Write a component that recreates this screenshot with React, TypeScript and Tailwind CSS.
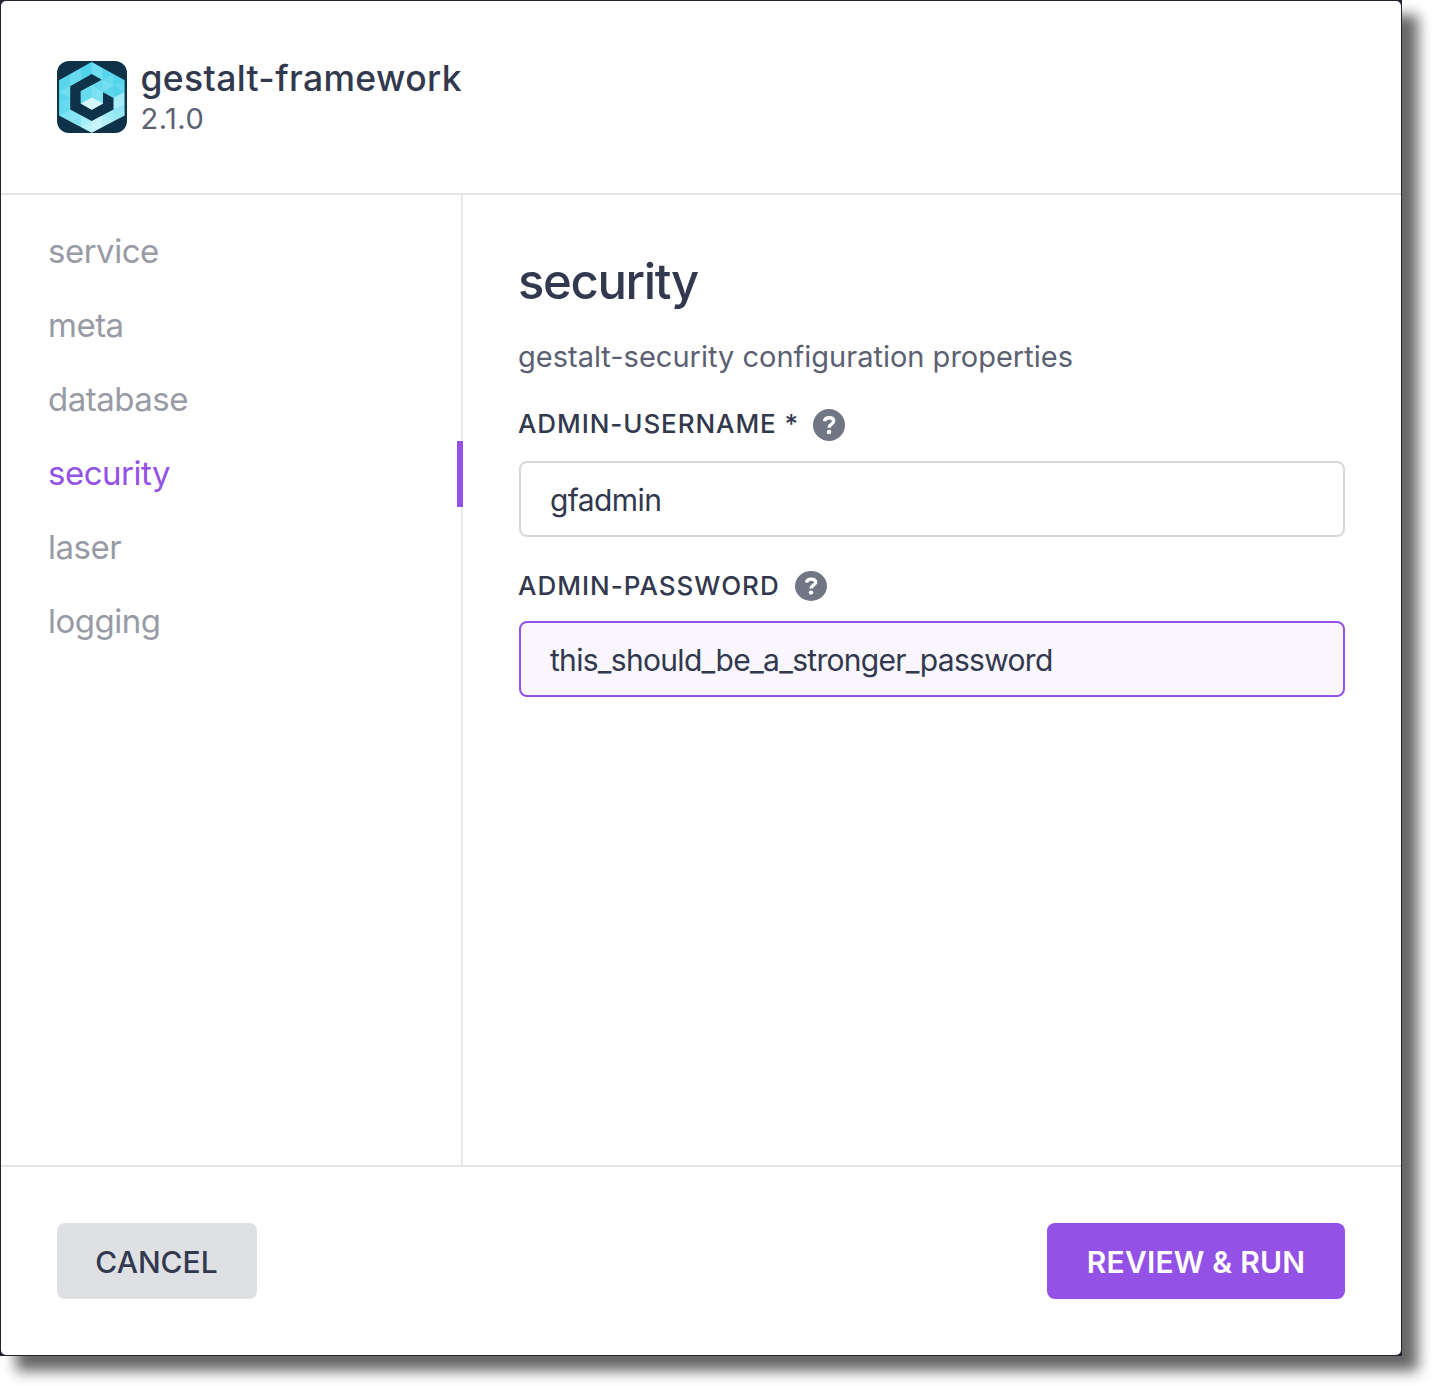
const NAV = ["service", "meta", "database", "security", "laser", "logging"];

function Logo() {
  return (
    <svg width="70" height="72" viewBox="0 0 70 72" className="shrink-0">
      <defs>
        <clipPath id="hex">
          <path d="M34.700 1 67.500 19.200V54.500L34.700 71.800 2.200 54.500V19.200Z" />
        </clipPath>
        <linearGradient id="face" x1="0" y1="0" x2="0.300" y2="1">
          <stop offset="0" stopColor="#59d6ed" />
          <stop offset="0.550" stopColor="#66daee" />
          <stop offset="1" stopColor="#b4f0f8" />
        </linearGradient>
      </defs>
      <rect width="70" height="72" rx="12" fill="#0e3247" />
      <g clipPath="url(#hex)">
        <rect width="70" height="72" fill="url(#face)" />
        <g opacity="0.7">
          <path d="M34.700 1 24 7v12l10.700-6z" fill="#4cd2eb" />
          <path d="M34.700 1 45.500 7v12l-10.800-6z" fill="#79e0f1" />
          <path d="M24 7 13 13v12l11-6z" fill="#6edcef" />
          <path d="M13 13 2 19v12l11-6z" fill="#56d5ec" />
          <path d="M45.500 7l11 6-11 6z" fill="#50d3ec" />
          <path d="M45.500 19l11-6v12z" fill="#6cdcef" />
          <path d="M56.500 13l11 6-11 6z" fill="#4ed1eb" />
          <path d="M45.500 19l11 6-11 6z" fill="#7be1f1" />
          <path d="M56.500 25l11-6v12z" fill="#62d9ee" />
          <path d="M45.500 31l11-6v12z" fill="#54d4ec" />
          <path d="M56.500 25l11 6-11 6z" fill="#48cfea" />
          <path d="M2 31l11-6v12z" fill="#78e0f1" />
          <path d="M2 31l11 6-11 6z" fill="#54d4ec" />
          <path d="M2 43l11-6v12z" fill="#68dbef" />
          <path d="M2 43l11 6-11 6z" fill="#5ad6ed" />
          <path d="M13 49v11L2 55z" fill="#7be1f1" />
          <path d="M13 49l11 6-11 6z" fill="#88e5f3" />
          <path d="M24 55v11l-11-5z" fill="#78e0f1" />
          <path d="M24 55l10.700 5L24 66z" fill="#a8edf6" />
          <path d="M34.700 60v12L24 66z" fill="#bdf2f9" />
          <path d="M34.700 60 45.500 54v12l-10.800 6z" fill="#d4f7fb" />
          <path d="M45.500 54v12l11-6z" fill="#b6f0f8" />
          <path d="M45.500 54l11-6v12z" fill="#a0ebf6" />
          <path d="M56.500 48l11-5v12l-11 5z" fill="#8de6f4" />
          <path d="M56.500 37l11-6v12z" fill="#b0eff8" />
          <path d="M56.500 37v11l11-5z" fill="#b8f1f8" />
        </g>
      </g>
      <path d="M34.700 13 44.700 18.700 23.800 30.300V42.500L34.700 48.700 46 42.500V31.200L56.500 37V48.500L34.700 60 13.200 48.500V25.300Z" fill="#0e3247" />
      <path d="M23.800 30.300 34.700 24.200V36.500L23.800 42.500z" fill="#66daee" />
      <path d="M34.700 24.200 46 31v11.500L34.700 36.500z" fill="#7de1f1" />
      <path d="M34.700 36.500 46 42.500l-11.300 6.200-10.900-6.200z" fill="#d6f7fc" />
    </svg>
  );
}

function Help({ height = 32 }: { height?: number }) {
  return (
    <svg width="32" height={height} viewBox="0 0 32 32" preserveAspectRatio="none" className="shrink-0 self-end">
      <circle cx="16" cy="16" r="16" fill="#717684" />
      <path d="M11.500 12.300C11.800 9.800 13.600 8.700 16.200 8.700c2.700 0 4.500 1.200 4.500 3.400 0 3.200-4.600 2.900-4.600 6.600" fill="none" stroke="#fff" strokeWidth="3.400" />
      <circle cx="16" cy="23" r="2.300" fill="#fff" />
    </svg>
  );
}

export default function App() {
  return (
    <div className="h-[1386px] w-[1432px] overflow-hidden bg-white font-['Inter',sans-serif] text-[#32384d]">
      <div className="h-[1356px] w-[1402px] bg-[#25232f] p-px shadow-[16px_15px_13px_rgba(0,0,0,0.6)]">
        <div className="flex h-full flex-col rounded-[5px] bg-white">
          <header className="flex h-[194px] items-start gap-[13.5px] border-b-2 border-[#e4e4e5] px-14 pt-[60px]">
            <Logo />
            <div>
              <h1 className="mt-[-2px] text-[35.5px] leading-[40px] font-medium tracking-[0.37px]">gestalt-framework</h1>
              <p className="text-[29px] leading-[40px] tracking-[0.5px] text-[#5b6072]">2.1.0</p>
            </div>
          </header>
          <div className="flex min-h-0 flex-1">
            <nav className="flex w-[462px] flex-col gap-2 border-r-2 border-[#e8e8e9] pt-6">
              {NAV.map((n) => (
                <a
                  key={n}
                  className={
                    "relative flex h-[66px] items-center pl-[47px] text-[33px] tracking-[-0.5px] " +
                    (n === "security" ? "text-[#9351e5]" : "text-[#989ba6]")
                  }
                >
                  {n}
                  {n === "security" && <span className="absolute top-0 -right-0.5 h-full w-1.5 bg-[#9351e5]" />}
                </a>
              ))}
            </nav>
            <main className="flex-1 px-14 pt-[57px]">
              <h2 className="-ml-px text-[49px] leading-[60px] font-medium tracking-[-1.35px]">security</h2>
              <p className="mt-[25px] -ml-px text-[29px] leading-[40px] text-[#5b6072]">gestalt-security configuration properties</p>
              <div className="mt-8 flex h-8 items-center gap-[14px]">
                <label className="-ml-px pb-1 text-[26px] font-medium tracking-[0.92px]">ADMIN-USERNAME *</label>
                <Help />
              </div>
              <div className="mt-5 flex h-[76px] items-center rounded-lg border-2 border-[#d6d7db] pt-0.5 pl-[29px] text-[30px] tracking-[-0.6px]">gfadmin</div>
              <div className="mt-8 flex h-8 items-center gap-[15px]">
                <label className="-ml-px text-[26px] font-medium tracking-[1px]">ADMIN-PASSWORD</label>
                <Help height={30} />
              </div>
              <div className="mt-5 flex h-[76px] items-center rounded-lg border-2 border-[#9351e5] bg-[#f9f6fe] pt-0.5 pl-[29px] text-[30px] tracking-[-0.7px]">this_should_be_a_stronger_password</div>
            </main>
          </div>
          <footer className="flex h-[190px] items-start justify-between border-t-2 border-[#e4e4e5] px-14 pt-14">
            <button className="h-[76px] w-[200px] rounded-lg bg-[#dfe0e4] pt-[3px] pr-px text-[30px] font-medium">CANCEL</button>
            <button className="h-[76px] w-[298px] rounded-lg bg-[#9351e5] pt-[3px] text-[30px] font-semibold tracking-[0.2px] text-white">REVIEW &amp; RUN</button>
          </footer>
        </div>
      </div>
    </div>
  );
}
